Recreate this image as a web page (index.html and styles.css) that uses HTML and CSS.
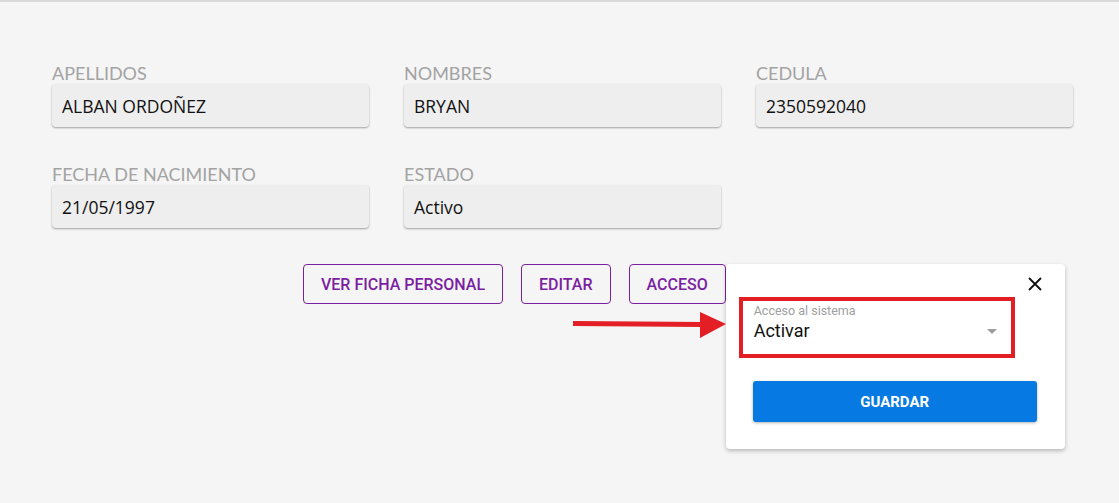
FILE: index.html
```html
<!DOCTYPE html>
<html lang="es">
<head>
    <meta charset="UTF-8">
    <meta name="viewport" content="width=device-width, initial-scale=1.0">
    <title>Ficha</title>
    <link rel="stylesheet" href="styles.css">
</head>
<body>
    <div class="topline"></div>
    <div class="page">
        <div class="fields">
            <div class="field">
                <label>APELLIDOS</label>
                <div class="value">ALBAN ORDOÑEZ</div>
            </div>
            <div class="field">
                <label>NOMBRES</label>
                <div class="value">BRYAN</div>
            </div>
            <div class="field">
                <label>CEDULA</label>
                <div class="value">2350592040</div>
            </div>
            <div class="field">
                <label>FECHA DE NACIMIENTO</label>
                <div class="value">21/05/1997</div>
            </div>
            <div class="field">
                <label>ESTADO</label>
                <div class="value">Activo</div>
            </div>
        </div>

        <div class="actions">
            <button class="outline">VER FICHA PERSONAL</button>
            <button class="outline">EDITAR</button>
            <div class="anchor">
                <button class="outline">ACCESO</button>
                <div class="popup">
                    <button class="close" aria-label="Cerrar">
                        <svg width="14" height="14" viewBox="0 0 14 14"><path d="M1 1L13 13M13 1L1 13" stroke="#111" stroke-width="1.8" fill="none"/></svg>
                    </button>
                    <div class="select-box">
                        <span class="select-label">Acceso al sistema</span>
                        <div class="select-row">
                            <span>Activar</span>
                            <span class="caret"></span>
                        </div>
                    </div>
                    <button class="save">GUARDAR</button>
                </div>
            </div>
        </div>
    </div>

    <svg class="arrow" width="160" height="30" viewBox="0 0 160 30">
        <path d="M0 11.5L130 12.5" stroke="#e31e24" stroke-width="5" fill="none"/>
        <polygon points="127,0 153,12 127,26" fill="#e31e24"/>
    </svg>
</body>
</html>
```

FILE: styles.css
```css
body {
    margin: 0;
    background-color: #f5f5f5;
    font-family: Roboto, Arial, sans-serif;
    position: relative;
    height: 503px;
    overflow: hidden;
}
.topline {
    height: 2px;
    background-color: #d9d9d9;
}
.page {
    padding: 61px 45px 0 52px;
}
.fields {
    display: grid;
    grid-template-columns: repeat(3, 317px);
    column-gap: 35px;
    row-gap: 37px;
}
.field label {
    display: block;
    font-family: Lato, sans-serif;
    font-size: 18px;
    line-height: 21px;
    color: #a3a3a3;
}
.field .value {
    height: 43px;
    box-sizing: border-box;
    padding: 0 10px;
    display: flex;
    align-items: center;
    background-color: #eeeeee;
    border-radius: 4px;
    box-shadow: 0 1px 2px rgba(0, 0, 0, 0.35);
    font-family: "Open Sans", sans-serif;
    font-size: 17.5px;
    color: #111;
}
.actions {
    display: flex;
    gap: 18px;
    margin-top: 36px;
    padding-left: 251px;
}
.outline {
    height: 40px;
    padding: 0 17px;
    background: transparent;
    border: 1px solid #7b1fa2;
    border-radius: 4px;
    color: #7b1fa2;
    font-family: Roboto, sans-serif;
    font-weight: 500;
    font-size: 16px;
    cursor: pointer;
}
.anchor {
    position: relative;
}
.popup {
    position: absolute;
    left: 100%;
    top: 0;
    width: 339px;
    height: 185px;
    box-sizing: border-box;
    padding-top: 33px;
    background-color: #fff;
    border-radius: 4px;
    box-shadow: 0 2px 4px rgba(0, 0, 0, 0.25);
}
.close {
    position: absolute;
    top: 13px;
    right: 23px;
    padding: 0;
    border: none;
    background: none;
    width: 14px;
    height: 14px;
    cursor: pointer;
}
.close svg {
    display: block;
}
.select-box {
    margin-left: 13px;
    width: 276px;
    height: 61px;
    box-sizing: border-box;
    border: 4px solid #e31e24;
    padding: 2px 14px 0 11px;
}
.select-label {
    display: block;
    font-size: 12.5px;
    line-height: 15px;
    color: #9e9e9e;
}
.select-row {
    display: flex;
    justify-content: space-between;
    align-items: center;
    font-size: 18px;
    color: #111;
    line-height: 26px;
}
.caret {
    width: 0;
    height: 0;
    border-left: 5.5px solid transparent;
    border-right: 5.5px solid transparent;
    border-top: 5.5px solid #9e9e9e;
}
.save {
    display: block;
    margin: 23px 0 0 27px;
    width: 284px;
    height: 41px;
    border: none;
    border-radius: 3px;
    background-color: #0779e2;
    color: #fff;
    font-family: Roboto, sans-serif;
    font-weight: 700;
    font-size: 15px;
    box-shadow: 0 1px 3px rgba(0, 0, 0, 0.3);
    cursor: pointer;
}
.arrow {
    position: absolute;
    left: 573px;
    top: 312px;
}
```
